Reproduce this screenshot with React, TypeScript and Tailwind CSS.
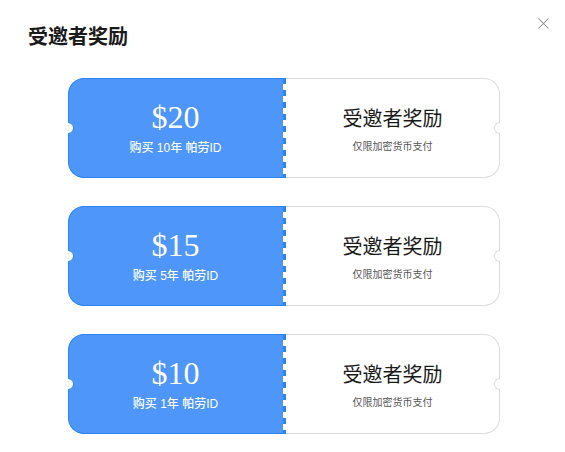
import { X } from 'lucide-react'

const COUPONS = [
  { price: '$20', desc: '购买 10年 帕劳ID' },
  { price: '$15', desc: '购买 5年 帕劳ID' },
  { price: '$10', desc: '购买 1年 帕劳ID' },
]

const cjk = "font-['Noto_Sans_CJK_SC','Noto_Sans',sans-serif]"

function Coupon({ price, desc }: { price: string; desc: string }) {
  return (
    <div className="relative flex h-[100px] w-[432px]">
      {/* Left blue part */}
      <div className="relative flex w-[215px] flex-col items-center rounded-l-[16px] border border-r-0 border-[#2a86f3] bg-[#4e96fa] pr-[1px] text-white">
        <div className="mt-[15px] text-[32px] leading-[46px] font-['Liberation_Serif',serif]">{price}</div>
        <div className="-mt-[1px] text-[12px] font-medium leading-[18px] font-['Liberation_Sans','Noto_Sans_CJK_SC',sans-serif]">{desc}</div>
      </div>
      {/* dashed edge */}
      <div className="w-[3px] bg-[repeating-linear-gradient(to_bottom,#2a86f3_0px,#2a86f3_6px,#ffffff_6px,#ffffff_12px)]" />
      {/* Right white part */}
      <div className="flex flex-1 flex-col items-center rounded-r-[16px] border border-l-0 border-[#dcdcdc] bg-white">
        <div className={`mt-[24px] text-[20px] leading-[30px] text-[#1a1a1a] ${cjk}`}>受邀者奖励</div>
        <div className={`mt-[5px] text-[10px] leading-[16px] text-[#555] ${cjk}`}>仅限加密货币支付</div>
      </div>
      {/* notches */}
      <div className="absolute left-[-6px] top-[44px] h-[12px] w-[12px] rounded-full border border-[#2a86f3] bg-white [clip-path:inset(0_0_0_50%)]" />
      <div className="absolute left-[-7px] top-[43px] h-[14px] w-[7px] bg-white" />
      <div className="absolute right-[-6px] top-[44px] h-[12px] w-[12px] rounded-full border border-[#dcdcdc] bg-white [clip-path:inset(0_50%_0_0)]" />
      <div className="absolute right-[-7px] top-[43px] h-[14px] w-[7px] bg-white" />
    </div>
  )
}

export default function App() {
  return (
    <div className="relative h-[452px] w-[565px] bg-white">
      <div className="pl-[28px] pt-[22px]">
        <h1 className={`text-[20px] font-bold leading-[28px] text-[#1a1a1a] ${cjk}`}>受邀者奖励</h1>
      </div>
      <X className="absolute right-[12px] top-[14px] h-[19px] w-[19px] text-[#8a8a8a]" strokeWidth={1.3} />
      <div className="mt-[28px] flex flex-col items-start gap-[28px] pl-[68px]">
        {COUPONS.map(c => (
          <Coupon key={c.price} price={c.price} desc={c.desc} />
        ))}
      </div>
    </div>
  )
}
